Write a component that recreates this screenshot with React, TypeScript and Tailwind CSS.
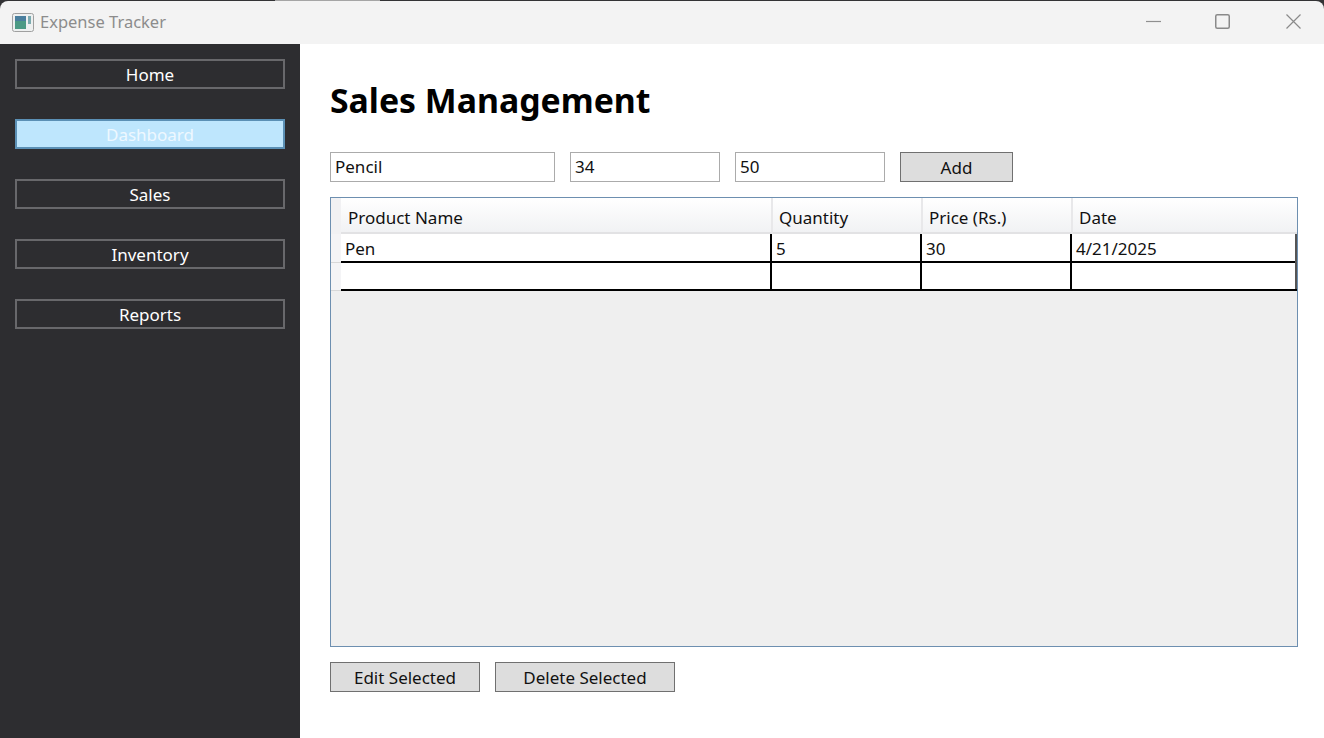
import React from 'react'

const font = "font-['Noto_Sans','Open_Sans',sans-serif]"

const navItems = ['Home', 'Dashboard', 'Sales', 'Inventory', 'Reports']
const cols = 'grid grid-cols-[431px_150px_150px_225px]'

function AppIcon() {
  return (
    <svg width="22" height="19" viewBox="0 0 22 19" className="shrink-0">
      <rect x="0.5" y="0.5" width="21" height="18" rx="2" fill="#eef0f0" stroke="#a0a0a0" />
      <rect x="3" y="3" width="11" height="13" fill="#4c9a85" />
      <rect x="3" y="3" width="11" height="5" fill="#4a7f9e" />
      <rect x="16" y="3" width="3" height="8" fill="#5f9aa0" opacity="0.8" />
    </svg>
  )
}

function WindowControls() {
  return (
    <div className="ml-auto flex items-center gap-[54px] pr-[23px] pb-[2px]">
      <svg width="15" height="15" viewBox="0 0 15 15" fill="none" stroke="#8f8f8f" strokeWidth="1.2">
        <path d="M0 7.5H15" />
      </svg>
      <svg width="15" height="15" viewBox="0 0 15 15" fill="none" stroke="#8a8a8a" strokeWidth="1.5">
        <rect x="0.75" y="0.75" width="13.5" height="13.5" rx="1.5" />
      </svg>
      <svg width="15" height="15" viewBox="0 0 15 15" fill="none" stroke="#8a8a8a" strokeWidth="1.2" className="ml-[2px]">
        <path d="M0.5 0.5L14.5 14.5M14.5 0.5L0.5 14.5" />
      </svg>
    </div>
  )
}

function GrayButton({ label, className }: { label: string; className: string }) {
  return (
    <button className={`h-[30px] pt-px bg-[#dddddd] border border-[#707070] text-[17px] text-[#111] ${className}`}>
      {label}
    </button>
  )
}

function TextBox({ value, className }: { value: string; className: string }) {
  return (
    <div className={`h-[30px] bg-white border border-[#ababab] pl-1 text-[17px] leading-[28px] text-[#111] ${className}`}>
      {value}
    </div>
  )
}

export default function App() {
  return (
    <div className={`${font} w-[1324px] h-[738px] overflow-hidden flex flex-col bg-[#2d2d30]`}>
      {/* Title bar */}
      <div className="h-[44px] bg-[#333335]">
        <div className="h-px flex">
          <div className="w-[275px]" />
          <div className="w-[105px] bg-[#a5a5a5]" />
        </div>
        <div className="h-[43px] rounded-t-lg bg-[#f3f3f3] flex items-center pl-[12px]">
          <AppIcon />
          <span className="ml-[6px] text-[16.5px] text-[#8c8c8c]">Expense Tracker</span>
          <WindowControls />
        </div>
      </div>

      <div className="flex-1 flex min-h-0">
        {/* Sidebar */}
        <div className="w-[300px] bg-[#2d2d30] flex flex-col gap-[30px] px-[15px] pt-[15px]">
          {navItems.map((item) =>
            item === 'Dashboard' ? (
              <button key={item} className="h-[30px] pt-px border-2 border-[#5b90b5] bg-[#bee6fd] text-[17px] text-[#eef8ff]">
                {item}
              </button>
            ) : (
              <button key={item} className="h-[30px] pt-px border-2 border-[#68686b] text-[17px] text-white">
                {item}
              </button>
            )
          )}
        </div>

        {/* Main */}
        <div className="flex-1 bg-white pl-[30px] pr-[26px] flex flex-col">
          <h1 className="mt-[29px] h-[54px] text-[33.8px] leading-[54px] font-bold text-black">Sales Management</h1>

          <div className="mt-[25px] flex gap-[15px]">
            <TextBox value="Pencil" className="w-[225px]" />
            <TextBox value="34" className="w-[150px]" />
            <TextBox value="50" className="w-[150px]" />
            <GrayButton label="Add" className="w-[113px]" />
          </div>

          {/* Data grid */}
          <div className="mt-[15px] h-[450px] border border-[#6d8fb0] bg-[#efefef] flex">
            <div className="w-[10px] flex flex-col">
              <div className="h-[36px] bg-[#f1f1f3]" />
              <div className="h-[29px] bg-[#f4f4f6] border-b border-[#d8d8d8]" />
              <div className="h-[28px] bg-[#f4f4f6] border-b border-[#d8d8d8]" />
            </div>
            <div className="flex-1 min-w-0 flex flex-col">
              <div className="grid grid-cols-[432px_150px_150px_224px] h-[36px] border-b-2 border-[#e2e2e4] bg-gradient-to-b from-white to-[#f1f2f4] text-[17px] text-[#111]">
                {['Product Name', 'Quantity', 'Price (Rs.)', 'Date'].map((h) => (
                  <div key={h} className="pl-[6px] first:pl-[7px] leading-[40px] border-r-2 border-[#e8e8ea] last:border-r-0">
                    {h}
                  </div>
                ))}
              </div>
              <div className={`${cols} h-[29px] bg-white border-b-2 border-black text-[17px] leading-[29px] text-[#111]`}>
                {['Pen', '5', '30', '4/21/2025'].map((c) => (
                  <div key={c} className="pl-[4px] border-r-2 border-black last:border-[#555]">
                    {c}
                  </div>
                ))}
              </div>
              <div className={`${cols} h-[28px] bg-white border-b-2 border-black`}>
                {['a', 'b', 'c', 'd'].map((c) => (
                  <div key={c} className="border-r-2 border-black last:border-[#555]" />
                ))}
              </div>
            </div>
          </div>

          <div className="mt-[15px] flex gap-[15px]">
            <GrayButton label="Edit Selected" className="w-[150px]" />
            <GrayButton label="Delete Selected" className="w-[180px]" />
          </div>
        </div>
      </div>
    </div>
  )
}
